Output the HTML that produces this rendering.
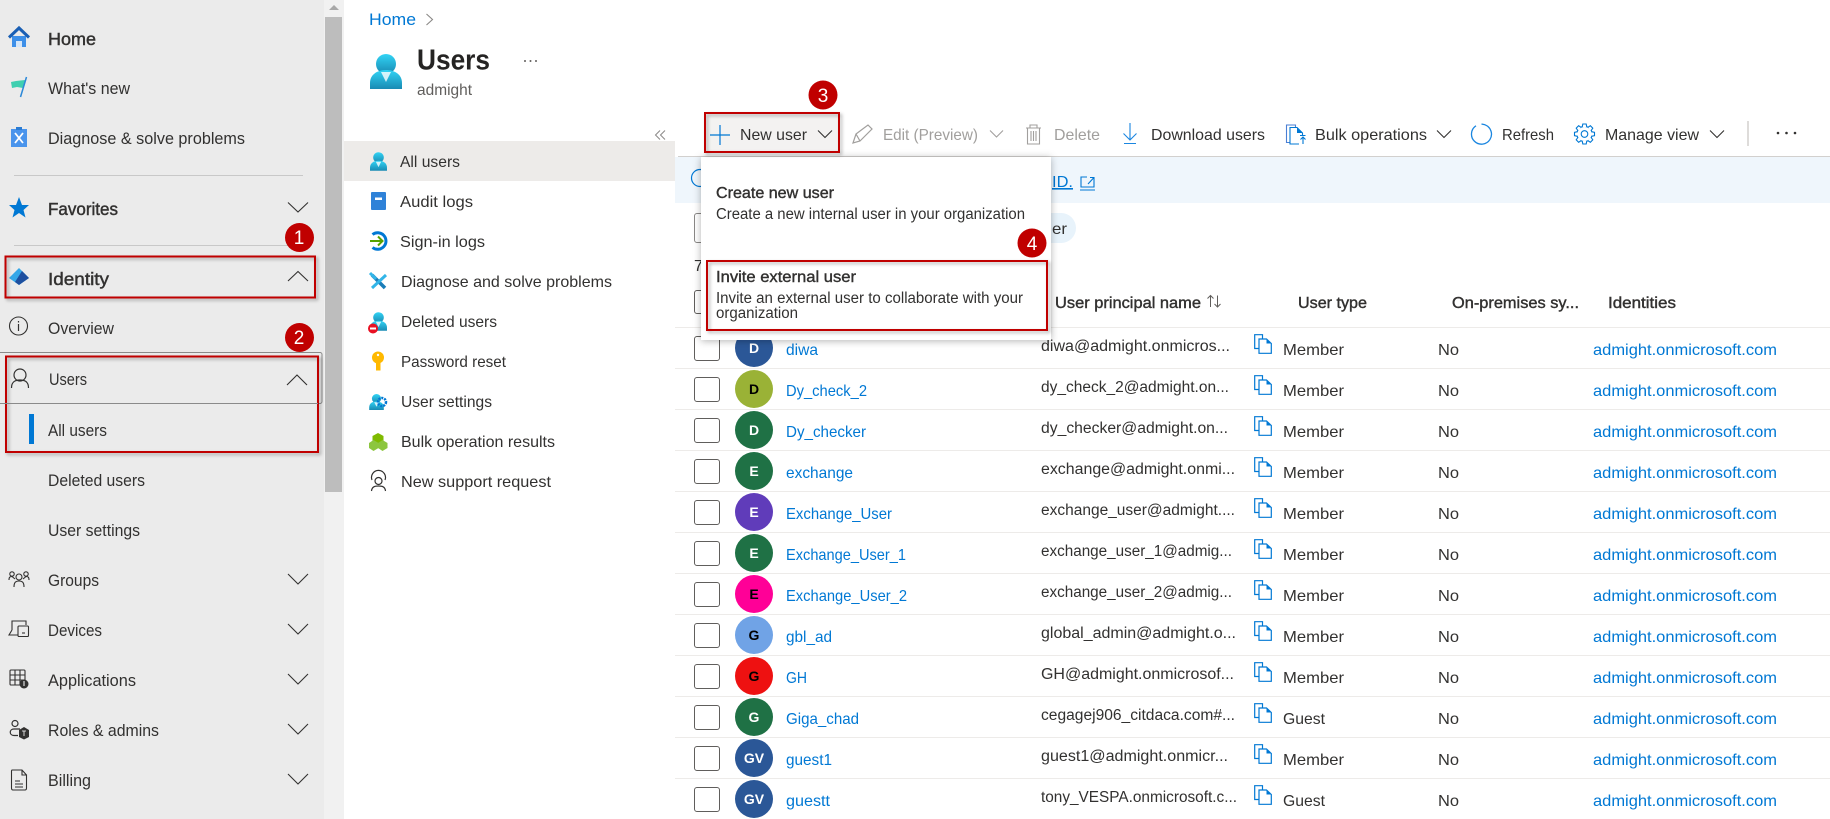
<!DOCTYPE html>
<html><head><meta charset="utf-8"><title>Users</title>
<style>
html,body{margin:0;padding:0;background:#fff;width:1830px;height:819px;overflow:hidden}
svg{display:block;font-family:"Liberation Sans",sans-serif}
.s{font-size:16.5px;fill:#323130}
.b{font-size:17.5px;fill:#323130;stroke:#323130;stroke-width:.45}
.m{font-size:16px;fill:#323130}
.t{font-size:16px;fill:#323130}
.d{font-size:16px;fill:#a19f9d}
.l{font-size:16px;fill:#0078d4}
.p{font-size:15.5px;fill:#323130}
.h{font-size:15.5px;fill:#323130;stroke:#323130;stroke-width:.4}
.a{font-size:14px;font-weight:bold;fill:#fff;text-anchor:middle}
.k{fill:#000}
.n{font-size:19px;fill:#fff;text-anchor:middle}
.red{fill:none;stroke:#c00000;stroke-width:2;filter:drop-shadow(2px 2px 1.5px rgba(0,0,0,.3))}
.ch{fill:none;stroke:#323130;stroke-width:1.1}
.ln{stroke:#edebe9;stroke-width:1}
.cb{fill:#fff;stroke:#605e5c;stroke-width:1}
</style></head><body>
<svg width="1830" height="819" viewBox="0 0 1830 819" xmlns="http://www.w3.org/2000/svg">
<defs>
<linearGradient id="ug" x1="0" y1="0" x2="0" y2="1"><stop offset="0" stop-color="#32d4f5"/><stop offset="1" stop-color="#198ab3"/></linearGradient>
<symbol id="user" viewBox="0 0 32 35"><circle cx="16" cy="10" r="10" fill="url(#ug)"/><path d="M0 35V29C0 20 8 16 16 16C24 16 32 20 32 29V35Z" fill="url(#ug)"/><path d="M11 18L16 28L21 18Z" fill="#fff" opacity=".8"/></symbol>
<symbol id="copy" viewBox="0 0 18 20"><path d="M4.500 14.500H.7V.7H8.500V4.500" fill="none" stroke="#0078d4" stroke-width="1.200"/><path d="M5 5H12.500L17.300 9.500V19.300H5Z" fill="#fff" stroke="#0078d4" stroke-width="1.200"/><path d="M12.500 5L17.300 9.500H12.500Z" fill="#0078d4"/></symbol>
<path id="tooth" d="M-2.300 -6.900L-1.700 -10H1.700L2.300 -6.900" fill="#fff" stroke="#0078d4" stroke-width="1.100"/>
</defs>

<!-- left sidebar -->
<rect x="0" y="0" width="324" height="819" fill="#ebebeb"/>
<rect x="324" y="0" width="20" height="819" fill="#f1f1f1"/>
<rect x="325" y="17" width="17" height="475" fill="#bdbdbd"/>
<path d="M329 10L334 5L339 10Z" fill="#a8a8a8"/>

<rect x="12" y="36" width="14" height="11" fill="#3d8fe8"/><rect x="16" y="41" width="6" height="6" fill="#d5e6f8"/>
<path d="M9 37.500L19 28L29 37.500" fill="none" stroke="#1a5fb4" stroke-width="3"/>
<text class="b" x="48" y="45" textLength="48" lengthAdjust="spacingAndGlyphs">Home</text>
<path d="M11 82L16 81L25 80L23 88L17 87L12 88Z" fill="#3fcfb0"/><path d="M26.500 77L20.500 97" stroke="#2b88d8" stroke-width="1.500"/>
<text class="s" x="48" y="94" textLength="82" lengthAdjust="spacingAndGlyphs">What's new</text>
<rect x="11" y="129" width="16" height="18" fill="#4a94ec"/><rect x="16" y="127" width="6" height="3" fill="#2b7cd3"/><path d="M15 133L23 143M23 133L15 143" stroke="#fff" stroke-width="1.800"/>
<text class="s" x="48" y="144" textLength="197" lengthAdjust="spacingAndGlyphs">Diagnose &amp; solve problems</text>
<line x1="14" y1="175.500" x2="303" y2="175.500" stroke="#c8c8c8"/>
<path d="M19 197L22 205H29L23.500 210L25.500 217.500L19 213L12.500 217.500L14.500 210L9 205H16Z" fill="#0078d4"/>
<text class="b" x="48" y="215" textLength="70" lengthAdjust="spacingAndGlyphs">Favorites</text>
<path class="ch" d="M288 202.500L298 212L308 202.500"/>
<line x1="14" y1="245.500" x2="303" y2="245.500" stroke="#c8c8c8"/>
<path d="M19 268L29 278L19 285L9 278Z" fill="#35a7e8"/><path d="M22 271L29 278L19 285L15 282Z" fill="#1d4f9f"/>
<text class="b" x="48" y="285" textLength="61" lengthAdjust="spacingAndGlyphs">Identity</text>
<path class="ch" d="M288 281L298 271.500L308 281"/>
<circle cx="18.500" cy="326" r="9" fill="none" stroke="#323130" stroke-width="1.100"/><path d="M18.500 324V331M18.500 321V322.500" stroke="#323130" stroke-width="1.200"/>
<text class="s" x="48" y="334" textLength="66" lengthAdjust="spacingAndGlyphs">Overview</text>
<rect x="-3" y="352.500" width="325" height="51" rx="2" fill="#ebebeb" stroke="#8a8a8a"/>
<circle cx="20" cy="375" r="6" fill="none" stroke="#323130" stroke-width="1.200"/><path d="M11.500 388C11.500 381 16 380 20 380C24 380 28.500 381 28.500 388" fill="none" stroke="#323130" stroke-width="1.200"/>
<text class="s" x="49" y="385" textLength="38" lengthAdjust="spacingAndGlyphs">Users</text>
<path class="ch" d="M287 385L297 375L307 385"/>
<rect x="29" y="414" width="5" height="30" fill="#0078d4"/>
<text class="s" x="48" y="436" textLength="59" lengthAdjust="spacingAndGlyphs">All users</text>
<text class="s" x="48" y="486" textLength="97" lengthAdjust="spacingAndGlyphs">Deleted users</text>
<text class="s" x="48" y="536" textLength="92" lengthAdjust="spacingAndGlyphs">User settings</text>

<g fill="none" stroke="#323130" stroke-width="1.100"><circle cx="19" cy="577" r="3"/><path d="M14 587C14 582 16 581 19 581C22 581 24 582 24 587"/><circle cx="12" cy="574" r="2.200"/><circle cx="26" cy="574" r="2.200"/><path d="M9 580C9 577 10 576.500 12 576.500L15 579M29 580C29 577 28 576.500 26 576.500L23 579"/></g>
<text class="s" x="48" y="586" textLength="51" lengthAdjust="spacingAndGlyphs">Groups</text>
<path class="ch" d="M288 574L298 584L308 574"/>
<g fill="none" stroke="#323130" stroke-width="1.100"><path d="M12 630V621H26V625M12 630L9 635H18"/><rect x="18" y="626" width="10.500" height="10.500" rx="1"/><path d="M22 633H25"/></g>
<text class="s" x="48" y="636" textLength="54" lengthAdjust="spacingAndGlyphs">Devices</text>
<path class="ch" d="M288 624L298 634L308 624"/>
<g fill="none" stroke="#323130" stroke-width="1.100"><rect x="10" y="670" width="15" height="15" rx="1"/><path d="M15 670V685M20 670V685M10 675H25M10 680H25"/></g><circle cx="24" cy="684" r="4.500" fill="#323130"/><path d="M24 681V686" stroke="#fff"/>
<text class="s" x="48" y="686" textLength="88" lengthAdjust="spacingAndGlyphs">Applications</text>
<path class="ch" d="M288 674L298 684L308 674"/>
<g fill="none" stroke="#323130" stroke-width="1.200"><circle cx="15" cy="723.500" r="3"/><path d="M20 729H14C9 729 9 735.500 14 735.500H18"/></g><path d="M24 727L29 730V737L24 739.500L19 737V730Z" fill="#323130"/><path d="M22 731H26M24 731V736" stroke="#fff" stroke-width=".8"/>
<text class="s" x="48" y="736" textLength="111" lengthAdjust="spacingAndGlyphs">Roles &amp; admins</text>
<path class="ch" d="M288 724L298 734L308 724"/>
<path d="M12 770H22L26.500 775V788C26.500 789 26 790 25 790H13C12 790 11.500 789 11.500 788V771C11.500 770.500 12 770 12 770ZM22 770V775H26.500M15 781H20M15 784H23M15 787H23" fill="none" stroke="#323130" stroke-width="1.100"/>
<text class="s" x="48" y="786" textLength="43" lengthAdjust="spacingAndGlyphs">Billing</text>
<path class="ch" d="M288 774L298 784L308 774"/>

<rect class="red" x="5.500" y="256.500" width="309.500" height="41"/>
<rect class="red" x="6" y="356.500" width="312" height="95.500"/>
<line x1="5" y1="403.500" x2="318" y2="403.500" stroke="#8a8a8a"/>
<circle cx="299.500" cy="237.500" r="14.500" fill="#c00000"/><text class="n" x="299" y="244">1</text>
<circle cx="299.500" cy="337.500" r="14.500" fill="#c00000"/><text class="n" x="299" y="344">2</text>

<!-- header -->
<text class="l" style="font-size:17px" x="369" y="25" textLength="47" lengthAdjust="spacingAndGlyphs">Home</text>
<path d="M426.500 14L432.500 19.500L426.500 25" fill="none" stroke="#8a8886" stroke-width="1.100"/>
<use href="#user" x="370" y="54" width="32" height="35"/>
<text style="font-size:29px;font-weight:bold;fill:#252423" x="417" y="69.500" textLength="73" lengthAdjust="spacingAndGlyphs">Users</text>
<g fill="#605e5c"><circle cx="525" cy="61" r="1"/><circle cx="530.500" cy="61" r="1"/><circle cx="536" cy="61" r="1"/></g>
<text style="font-size:16px;fill:#605e5c" x="417" y="95" textLength="55" lengthAdjust="spacingAndGlyphs">admight</text>
<path d="M660 130.500L655.500 135L660 139.500M665 130.500L660.500 135L665 139.500" fill="none" stroke="#8a8886" stroke-width="1"/>

<!-- left nav -->
<rect x="344" y="141" width="331" height="40" fill="#edebe9"/>
<use href="#user" x="370" y="152" width="17" height="19"/>
<text class="t" x="400" y="167" textLength="60" lengthAdjust="spacingAndGlyphs">All users</text>
<rect x="371" y="192" width="15" height="18" rx="1" fill="#2f82d8"/><rect x="375" y="197.500" width="7" height="2.500" fill="#fff"/>
<text class="t" x="400" y="207" textLength="73" lengthAdjust="spacingAndGlyphs">Audit logs</text>
<path d="M372.500 234.500A8.300 8.300 0 1 1 372.500 247.500" fill="none" stroke="#0078d4" stroke-width="3"/><path d="M370 241H382M378 236.500L382.500 241L378 245.500" fill="none" stroke="#57a300" stroke-width="2"/>
<text class="t" x="400" y="247" textLength="85" lengthAdjust="spacingAndGlyphs">Sign-in logs</text>
<path d="M372 275L385 288" stroke="#1a7db8" stroke-width="3.500"/><path d="M386 275L372 288" stroke="#32b5e8" stroke-width="3"/><path d="M370 273L376 279" stroke="#32b5e8" stroke-width="3"/>
<text class="t" x="401" y="287" textLength="211" lengthAdjust="spacingAndGlyphs">Diagnose and solve problems</text>
<use href="#user" x="370" y="312" width="17" height="19"/><circle cx="373" cy="328.500" r="5" fill="#e81123"/><rect x="370" y="327.500" width="6" height="2" fill="#fff"/>
<text class="t" x="401" y="327" textLength="96" lengthAdjust="spacingAndGlyphs">Deleted users</text>
<circle cx="378" cy="357.500" r="6" fill="#ffb900"/><rect x="376" y="360" width="4.500" height="10.500" fill="#ffb900"/><circle cx="378" cy="355" r="1.200" fill="#fff"/>
<text class="t" x="401" y="367" textLength="105" lengthAdjust="spacingAndGlyphs">Password reset</text>
<use href="#user" x="369" y="394" width="15" height="16"/><circle cx="382" cy="402" r="4" fill="none" stroke="#0078d4" stroke-width="2.500" stroke-dasharray="2 1"/>
<text class="t" x="401" y="407" textLength="91" lengthAdjust="spacingAndGlyphs">User settings</text>
<g fill="#7fba00"><path d="M378 433L383.500 436V441L378 444L372.500 441V436Z"/><path d="M373.500 440L378.500 443V448L373.500 451L369 448V443Z" fill="#8cc63f"/><path d="M382.500 440L387.500 443V448L382.500 451L378 448V443Z" fill="#8cc63f"/></g>
<text class="t" x="401" y="447" textLength="154" lengthAdjust="spacingAndGlyphs">Bulk operation results</text>
<g fill="none" stroke="#323130" stroke-width="1.200"><circle cx="378.500" cy="481" r="3.500"/><path d="M372 480A7 7 0 1 1 385 480"/><path d="M371.500 491C372 486.500 375 486 378.500 486C382 486 385 486.500 385.500 491"/></g>
<text class="t" x="401" y="487" textLength="150" lengthAdjust="spacingAndGlyphs">New support request</text>

<!-- toolbar -->
<rect x="705" y="113" width="134" height="39" fill="#f3f2f1"/>
<path d="M720 125V145M710 135H730" stroke="#0078d4" stroke-width="1.200"/>
<text class="m" x="740" y="140" textLength="67" lengthAdjust="spacingAndGlyphs">New user</text>
<path class="ch" d="M818 130.500L825 137.500L832 130.500"/>
<path d="M853 143L856 134L868 125L872 129L860 141ZM856 134L860 141" fill="none" stroke="#a19f9d" stroke-width="1.200"/>
<text class="d" x="883" y="140" textLength="95" lengthAdjust="spacingAndGlyphs">Edit (Preview)</text>
<path d="M990 130.500L996.500 137L1003 130.500" fill="none" stroke="#a19f9d" stroke-width="1.100"/>
<path d="M1026 128H1041M1030 128V125H1037V128M1027.500 128V144H1039.500V128M1031 131V141M1033.500 131V141M1036 131V141" fill="none" stroke="#a19f9d" stroke-width="1.100"/>
<text class="d" x="1054" y="140" textLength="46" lengthAdjust="spacingAndGlyphs">Delete</text>
<path d="M1130 123V139.500M1123.500 133.500L1130 140L1136.500 133.500M1124 143.500H1136" fill="none" stroke="#1a86e0" stroke-width="1.100"/>
<text class="m" x="1151" y="140" textLength="114" lengthAdjust="spacingAndGlyphs">Download users</text>
<path d="M1289.500 142.500H1286.500V125H1295.500V127.500" fill="none" stroke="#4a7fd4" stroke-width="1.100"/>
<path d="M1299 144H1290V127.500H1297L1302.500 133V136" fill="none" stroke="#0078d4" stroke-width="1.100"/>
<path d="M1297 127.500L1302.500 133H1297Z" fill="#0078d4"/>
<path d="M1303 144V137.500M1300.500 139.500L1303 137L1305.500 139.500M1300 135.500H1305.500" fill="none" stroke="#0078d4" stroke-width="1.100"/>
<text class="m" x="1315" y="140" textLength="112" lengthAdjust="spacingAndGlyphs">Bulk operations</text>
<path class="ch" d="M1437 130.500L1444 137.500L1451 130.500"/>
<path d="M1476 125.800A10 10 0 1 0 1485 124.800L1481.500 124" fill="none" stroke="#1a86e0" stroke-width="1.300"/>
<text class="m" x="1502" y="140" textLength="52" lengthAdjust="spacingAndGlyphs">Refresh</text>
<g transform="translate(1584.500 134)">
<circle r="7.600" fill="#fff" stroke="#0078d4" stroke-width="1.100"/>
<use href="#tooth"/><use href="#tooth" transform="rotate(45)"/><use href="#tooth" transform="rotate(90)"/><use href="#tooth" transform="rotate(135)"/><use href="#tooth" transform="rotate(180)"/><use href="#tooth" transform="rotate(225)"/><use href="#tooth" transform="rotate(270)"/><use href="#tooth" transform="rotate(315)"/>
<circle r="3.300" fill="none" stroke="#0078d4" stroke-width="1.100"/>
</g>
<text class="m" x="1605" y="140" textLength="94" lengthAdjust="spacingAndGlyphs">Manage view</text>
<path class="ch" d="M1710 130.500L1717 137.500L1724 130.500"/>
<line x1="1748" y1="121" x2="1748" y2="146" stroke="#d2d0ce" stroke-width="1.500"/>
<g fill="#323130"><circle cx="1778" cy="133" r="1.300"/><circle cx="1786.500" cy="133" r="1.300"/><circle cx="1795" cy="133" r="1.300"/></g>
<line x1="678" y1="156.500" x2="1830" y2="156.500" stroke="#d2d0ce"/>

<!-- banner -->
<rect x="675" y="157" width="1155" height="46" fill="#eff6fc"/>
<circle cx="700" cy="178" r="8.500" fill="none" stroke="#0078d4" stroke-width="1.200"/>
<text class="l" x="1052" y="187" textLength="21" lengthAdjust="spacingAndGlyphs" text-decoration="underline">ID.</text>
<path d="M1087 177H1081V187H1094V181M1088 184L1094 177.500M1090 177.500H1094V181M1080 190H1095" fill="none" stroke="#0078d4" stroke-width="1.100"/>
<rect x="694.500" y="213.500" width="40" height="29" rx="2.500" fill="#fff" stroke="#8a8886"/>
<rect x="1000" y="213" width="76" height="30" rx="15" fill="#e8f3fb"/>
<text class="t" x="1052" y="234" textLength="15" lengthAdjust="spacingAndGlyphs">er</text>
<text class="t" x="694" y="271">7</text>

<!-- table header -->
<rect class="cb" x="694.500" y="290.500" width="25" height="23" rx="2.500"/>
<text class="h" x="1055" y="308" textLength="146" lengthAdjust="spacingAndGlyphs">User principal name</text>
<path d="M1210.500 307V295.500M1207.500 298.500L1210.500 295.500L1213.500 298.500M1217.500 295.500V307M1214.500 304L1217.500 307L1220.500 304" fill="none" stroke="#605e5c" stroke-width="1"/>
<text class="h" x="1298" y="308" textLength="69" lengthAdjust="spacingAndGlyphs">User type</text>
<text class="h" x="1452" y="308" textLength="127" lengthAdjust="spacingAndGlyphs">On-premises sy...</text>
<text class="h" x="1608" y="308" textLength="68" lengthAdjust="spacingAndGlyphs">Identities</text>
<line class="ln" x1="675" y1="327.500" x2="1830" y2="327.500"/>

<!-- rows -->
<g class="ln"><line x1="675" y1="368.500" x2="1830" y2="368.500"/><line x1="675" y1="409.500" x2="1830" y2="409.500"/><line x1="675" y1="450.500" x2="1830" y2="450.500"/><line x1="675" y1="491.500" x2="1830" y2="491.500"/><line x1="675" y1="532.500" x2="1830" y2="532.500"/><line x1="675" y1="573.500" x2="1830" y2="573.500"/><line x1="675" y1="614.500" x2="1830" y2="614.500"/><line x1="675" y1="655.500" x2="1830" y2="655.500"/><line x1="675" y1="696.500" x2="1830" y2="696.500"/><line x1="675" y1="737.500" x2="1830" y2="737.500"/><line x1="675" y1="778.500" x2="1830" y2="778.500"/></g>

<rect class="cb" x="694.500" y="336.500" width="25" height="24" rx="2.500"/><circle cx="754" cy="348" r="19" fill="#2b5797"/><text class="a" x="754" y="353">D</text>
<text class="l" x="786" y="355" textLength="32" lengthAdjust="spacingAndGlyphs">diwa</text>
<text class="p" x="1041" y="351" textLength="189" lengthAdjust="spacingAndGlyphs">diwa@admight.onmicros...</text>
<use href="#copy" x="1254" y="334" width="18" height="20"/><text class="t" x="1283" y="355" textLength="61" lengthAdjust="spacingAndGlyphs">Member</text><text class="t" x="1438" y="355" textLength="21" lengthAdjust="spacingAndGlyphs">No</text>
<text class="l" x="1593" y="355" textLength="184" lengthAdjust="spacingAndGlyphs">admight.onmicrosoft.com</text>

<rect class="cb" x="694.500" y="377.500" width="25" height="24" rx="2.500"/><circle cx="754" cy="389" r="19" fill="#9ab236"/><text class="a k" x="754" y="394">D</text>
<text class="l" x="786" y="396" textLength="81" lengthAdjust="spacingAndGlyphs">Dy_check_2</text>
<text class="p" x="1041" y="392" textLength="188" lengthAdjust="spacingAndGlyphs">dy_check_2@admight.on...</text>
<use href="#copy" x="1254" y="375" width="18" height="20"/><text class="t" x="1283" y="396" textLength="61" lengthAdjust="spacingAndGlyphs">Member</text><text class="t" x="1438" y="396" textLength="21" lengthAdjust="spacingAndGlyphs">No</text>
<text class="l" x="1593" y="396" textLength="184" lengthAdjust="spacingAndGlyphs">admight.onmicrosoft.com</text>

<rect class="cb" x="694.500" y="418.500" width="25" height="24" rx="2.500"/><circle cx="754" cy="430" r="19" fill="#1f7145"/><text class="a" x="754" y="435">D</text>
<text class="l" x="786" y="437" textLength="80" lengthAdjust="spacingAndGlyphs">Dy_checker</text>
<text class="p" x="1041" y="433" textLength="187" lengthAdjust="spacingAndGlyphs">dy_checker@admight.on...</text>
<use href="#copy" x="1254" y="416" width="18" height="20"/><text class="t" x="1283" y="437" textLength="61" lengthAdjust="spacingAndGlyphs">Member</text><text class="t" x="1438" y="437" textLength="21" lengthAdjust="spacingAndGlyphs">No</text>
<text class="l" x="1593" y="437" textLength="184" lengthAdjust="spacingAndGlyphs">admight.onmicrosoft.com</text>

<rect class="cb" x="694.500" y="459.500" width="25" height="24" rx="2.500"/><circle cx="754" cy="471" r="19" fill="#1f7145"/><text class="a" x="754" y="476">E</text>
<text class="l" x="786" y="478" textLength="67" lengthAdjust="spacingAndGlyphs">exchange</text>
<text class="p" x="1041" y="474" textLength="194" lengthAdjust="spacingAndGlyphs">exchange@admight.onmi...</text>
<use href="#copy" x="1254" y="457" width="18" height="20"/><text class="t" x="1283" y="478" textLength="61" lengthAdjust="spacingAndGlyphs">Member</text><text class="t" x="1438" y="478" textLength="21" lengthAdjust="spacingAndGlyphs">No</text>
<text class="l" x="1593" y="478" textLength="184" lengthAdjust="spacingAndGlyphs">admight.onmicrosoft.com</text>

<rect class="cb" x="694.500" y="500.500" width="25" height="24" rx="2.500"/><circle cx="754" cy="512" r="19" fill="#603cba"/><text class="a" x="754" y="517">E</text>
<text class="l" x="786" y="519" textLength="106" lengthAdjust="spacingAndGlyphs">Exchange_User</text>
<text class="p" x="1041" y="515" textLength="194" lengthAdjust="spacingAndGlyphs">exchange_user@admight....</text>
<use href="#copy" x="1254" y="498" width="18" height="20"/><text class="t" x="1283" y="519" textLength="61" lengthAdjust="spacingAndGlyphs">Member</text><text class="t" x="1438" y="519" textLength="21" lengthAdjust="spacingAndGlyphs">No</text>
<text class="l" x="1593" y="519" textLength="184" lengthAdjust="spacingAndGlyphs">admight.onmicrosoft.com</text>

<rect class="cb" x="694.500" y="541.500" width="25" height="24" rx="2.500"/><circle cx="754" cy="553" r="19" fill="#1f7145"/><text class="a" x="754" y="558">E</text>
<text class="l" x="786" y="560" textLength="120" lengthAdjust="spacingAndGlyphs">Exchange_User_1</text>
<text class="p" x="1041" y="556" textLength="191" lengthAdjust="spacingAndGlyphs">exchange_user_1@admig...</text>
<use href="#copy" x="1254" y="539" width="18" height="20"/><text class="t" x="1283" y="560" textLength="61" lengthAdjust="spacingAndGlyphs">Member</text><text class="t" x="1438" y="560" textLength="21" lengthAdjust="spacingAndGlyphs">No</text>
<text class="l" x="1593" y="560" textLength="184" lengthAdjust="spacingAndGlyphs">admight.onmicrosoft.com</text>

<rect class="cb" x="694.500" y="582.500" width="25" height="24" rx="2.500"/><circle cx="754" cy="594" r="19" fill="#ff0097"/><text class="a k" x="754" y="599">E</text>
<text class="l" x="786" y="601" textLength="121" lengthAdjust="spacingAndGlyphs">Exchange_User_2</text>
<text class="p" x="1041" y="597" textLength="191" lengthAdjust="spacingAndGlyphs">exchange_user_2@admig...</text>
<use href="#copy" x="1254" y="580" width="18" height="20"/><text class="t" x="1283" y="601" textLength="61" lengthAdjust="spacingAndGlyphs">Member</text><text class="t" x="1438" y="601" textLength="21" lengthAdjust="spacingAndGlyphs">No</text>
<text class="l" x="1593" y="601" textLength="184" lengthAdjust="spacingAndGlyphs">admight.onmicrosoft.com</text>

<rect class="cb" x="694.500" y="623.500" width="25" height="24" rx="2.500"/><circle cx="754" cy="635" r="19" fill="#70a3e6"/><text class="a k" x="754" y="640">G</text>
<text class="l" x="786" y="642" textLength="46" lengthAdjust="spacingAndGlyphs">gbl_ad</text>
<text class="p" x="1041" y="638" textLength="195" lengthAdjust="spacingAndGlyphs">global_admin@admight.o...</text>
<use href="#copy" x="1254" y="621" width="18" height="20"/><text class="t" x="1283" y="642" textLength="61" lengthAdjust="spacingAndGlyphs">Member</text><text class="t" x="1438" y="642" textLength="21" lengthAdjust="spacingAndGlyphs">No</text>
<text class="l" x="1593" y="642" textLength="184" lengthAdjust="spacingAndGlyphs">admight.onmicrosoft.com</text>

<rect class="cb" x="694.500" y="664.500" width="25" height="24" rx="2.500"/><circle cx="754" cy="676" r="19" fill="#ee1111"/><text class="a k" x="754" y="681">G</text>
<text class="l" x="786" y="683" textLength="21" lengthAdjust="spacingAndGlyphs">GH</text>
<text class="p" x="1041" y="679" textLength="193" lengthAdjust="spacingAndGlyphs">GH@admight.onmicrosof...</text>
<use href="#copy" x="1254" y="662" width="18" height="20"/><text class="t" x="1283" y="683" textLength="61" lengthAdjust="spacingAndGlyphs">Member</text><text class="t" x="1438" y="683" textLength="21" lengthAdjust="spacingAndGlyphs">No</text>
<text class="l" x="1593" y="683" textLength="184" lengthAdjust="spacingAndGlyphs">admight.onmicrosoft.com</text>

<rect class="cb" x="694.500" y="705.500" width="25" height="24" rx="2.500"/><circle cx="754" cy="717" r="19" fill="#1f7145"/><text class="a" x="754" y="722">G</text>
<text class="l" x="786" y="724" textLength="73" lengthAdjust="spacingAndGlyphs">Giga_chad</text>
<text class="p" x="1041" y="720" textLength="194" lengthAdjust="spacingAndGlyphs">cegagej906_citdaca.com#...</text>
<use href="#copy" x="1254" y="703" width="18" height="20"/><text class="t" x="1283" y="724" textLength="42" lengthAdjust="spacingAndGlyphs">Guest</text><text class="t" x="1438" y="724" textLength="21" lengthAdjust="spacingAndGlyphs">No</text>
<text class="l" x="1593" y="724" textLength="184" lengthAdjust="spacingAndGlyphs">admight.onmicrosoft.com</text>

<rect class="cb" x="694.500" y="746.500" width="25" height="24" rx="2.500"/><circle cx="754" cy="758" r="19" fill="#2b5797"/><text class="a" x="754" y="763">GV</text>
<text class="l" x="786" y="765" textLength="46" lengthAdjust="spacingAndGlyphs">guest1</text>
<text class="p" x="1041" y="761" textLength="187" lengthAdjust="spacingAndGlyphs">guest1@admight.onmicr...</text>
<use href="#copy" x="1254" y="744" width="18" height="20"/><text class="t" x="1283" y="765" textLength="61" lengthAdjust="spacingAndGlyphs">Member</text><text class="t" x="1438" y="765" textLength="21" lengthAdjust="spacingAndGlyphs">No</text>
<text class="l" x="1593" y="765" textLength="184" lengthAdjust="spacingAndGlyphs">admight.onmicrosoft.com</text>

<rect class="cb" x="694.500" y="787.500" width="25" height="24" rx="2.500"/><circle cx="754" cy="799" r="19" fill="#2b5797"/><text class="a" x="754" y="804">GV</text>
<text class="l" x="786" y="806" textLength="44" lengthAdjust="spacingAndGlyphs">guestt</text>
<text class="p" x="1041" y="802" textLength="196" lengthAdjust="spacingAndGlyphs">tony_VESPA.onmicrosoft.c...</text>
<use href="#copy" x="1254" y="785" width="18" height="20"/><text class="t" x="1283" y="806" textLength="42" lengthAdjust="spacingAndGlyphs">Guest</text><text class="t" x="1438" y="806" textLength="21" lengthAdjust="spacingAndGlyphs">No</text>
<text class="l" x="1593" y="806" textLength="184" lengthAdjust="spacingAndGlyphs">admight.onmicrosoft.com</text>

<!-- dropdown -->
<rect x="701" y="157" width="350" height="183" fill="#fff" style="filter:drop-shadow(0 1px 4px rgba(0,0,0,.3))"/>
<text class="h" style="font-size:16px" x="716" y="198" textLength="118" lengthAdjust="spacingAndGlyphs">Create new user</text>
<text class="p" x="716" y="219" textLength="309" lengthAdjust="spacingAndGlyphs">Create a new internal user in your organization</text>
<text class="h" style="font-size:16px" x="716" y="282" textLength="140" lengthAdjust="spacingAndGlyphs">Invite external user</text>
<text class="p" x="716" y="303" textLength="307" lengthAdjust="spacingAndGlyphs">Invite an external user to collaborate with your</text>
<text class="p" x="716" y="318" textLength="82" lengthAdjust="spacingAndGlyphs">organization</text>

<!-- annotations -->
<rect class="red" x="705" y="113" width="134" height="39"/>
<rect class="red" x="707" y="261" width="340" height="69"/>
<circle cx="823" cy="95" r="14.500" fill="#c00000"/><text class="n" x="823" y="102">3</text>
<circle cx="1032" cy="243" r="14.500" fill="#c00000"/><text class="n" x="1032" y="250">4</text>
</svg>
</body></html>
